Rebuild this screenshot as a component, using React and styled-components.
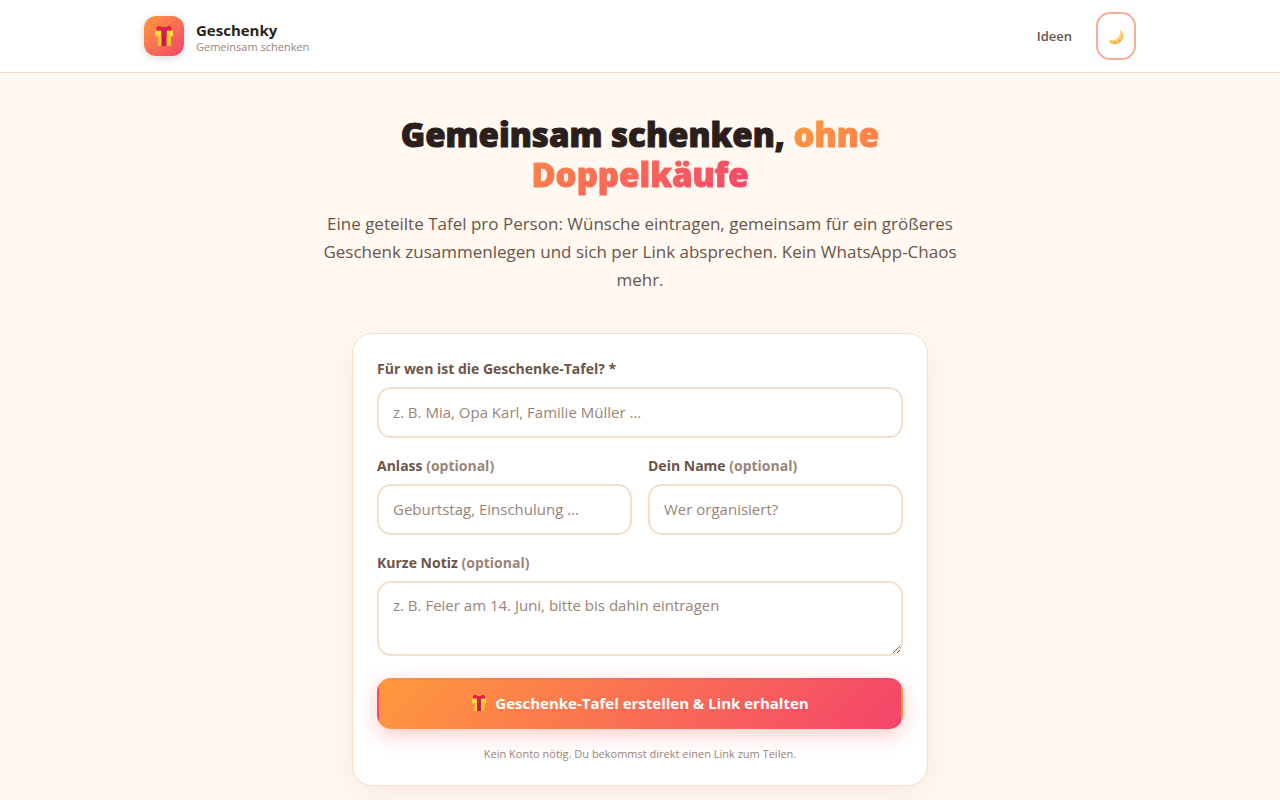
import React, { useState } from "react";
import styled, { createGlobalStyle } from "styled-components";

const GlobalStyle = createGlobalStyle`
  *, *::before, *::after {
    box-sizing: border-box;
  }

  body {
    margin: 0;
    background: #fff9f2;
    color: #2a1f1a;
    font-family: "Open Sans", "Noto Sans", sans-serif;
    font-size: 15px;
    line-height: 24px;
  }

  h1, p {
    margin: 0;
  }

  input, textarea, button {
    font: inherit;
  }
`;

const gradient = "linear-gradient(135deg, #ff9a3c 0%, #f4446b 100%)";

const Header = styled.header`
  background: #fff;
  border-bottom: 1px solid #f3dfcc;
`;

const HeaderInner = styled.div`
  display: flex;
  align-items: center;
  justify-content: space-between;
  max-width: 1040px;
  margin: 0 auto;
  padding: 12px 24px;
`;

const Brand = styled.a`
  display: flex;
  align-items: center;
  gap: 12px;
  color: inherit;
  text-decoration: none;
`;

const BrandMark = styled.span`
  display: flex;
  align-items: center;
  justify-content: center;
  width: 40px;
  height: 40px;
  border-radius: 12px;
  background: ${gradient};
  box-shadow: 0 2px 8px rgba(42, 31, 26, 0.16);
`;

const BrandText = styled.span`
  display: flex;
  flex-direction: column;
  padding-top: 4px;
`;

const BrandName = styled.span`
  font-size: 15px;
  font-weight: 700;
  line-height: 18px;
`;

const BrandClaim = styled.span`
  color: #9a8478;
  font-size: 11px;
  line-height: 16px;
`;

const Nav = styled.nav`
  display: flex;
  align-items: center;
  gap: 24px;
`;

const NavLink = styled.a`
  color: #6b5549;
  font-size: 13px;
  font-weight: 600;
  text-decoration: none;
`;

const ThemeToggle = styled.button`
  display: flex;
  align-items: center;
  justify-content: center;
  width: 40px;
  height: 48px;
  padding: 2px 0 0;
  border: 2px solid #f4b096;
  border-radius: 14px;
  background: #fff;
  cursor: pointer;
`;

const Main = styled.main`
  max-width: 688px;
  margin: 0 auto;
  padding: 42px 24px 48px;
`;

const Title = styled.h1`
  max-width: 560px;
  margin: 0 auto 15px;
  font-size: 33px;
  font-weight: 800;
  line-height: 40px;
  text-align: center;
  -webkit-text-stroke: 1px #2a1f1a;
`;

const Highlight = styled.span`
  background: ${gradient};
  -webkit-background-clip: text;
  background-clip: text;
  color: transparent;
  -webkit-text-stroke: 1px transparent;
`;

const Lead = styled.p`
  margin-bottom: 39px;
  color: #6b5549;
  font-size: 17px;
  line-height: 28px;
  text-align: center;
`;

const Card = styled.form`
  max-width: 576px;
  margin: 0 auto;
  padding: 24px;
  border: 1px solid #f3dfcc;
  border-radius: 20px;
  background: #fff;
  box-shadow: 0 8px 32px rgba(180, 80, 50, 0.09);
`;

const Fields = styled.div`
  display: flex;
  flex-direction: column;
  gap: 17px;
`;

const FieldRow = styled.div`
  display: grid;
  grid-template-columns: 1fr 1fr;
  gap: 16px;
`;

const Label = styled.label`
  display: block;
  margin-bottom: 7px;
  color: #6b5549;
  font-size: 14px;
  font-weight: 700;
  line-height: 22px;
`;

const Optional = styled.span`
  color: #9a8478;
`;

const Input = styled.input`
  display: block;
  width: 100%;
  height: 51px;
  padding: 0 14px 2px;
  border: 2px solid #f3dfcc;
  border-radius: 14px;
  background: #fff;
  color: #2a1f1a;
  outline: none;

  &::placeholder {
    color: #9a8478;
    opacity: 1;
  }

  &:focus {
    border-color: #f4b096;
  }
`;

const TextArea = styled(Input)`
  height: 75px;
  padding: 10px 14px;
  resize: vertical;
`;

const SubmitButton = styled.button`
  display: flex;
  align-items: center;
  justify-content: center;
  gap: 8px;
  width: 100%;
  height: 51px;
  margin-top: 22px;
  padding: 0 0 2px;
  border: 2px solid transparent;
  border-radius: 14px;
  background: ${gradient};
  box-shadow: 0 6px 20px rgba(244, 90, 70, 0.3);
  color: #fff;
  font-weight: 700;
  cursor: pointer;
`;

const Hint = styled.p`
  margin-top: 18px;
  color: #9a8478;
  font-size: 11px;
  line-height: 14px;
  text-align: center;
`;

const GiftIcon = ({ size }) => (
    <svg width={size} height={size} viewBox="0 0 20 20" aria-hidden="true">
        <path d="M3 9h14v10.200a.8.8 0 0 1-.8.8H3.800a.8.8 0 0 1-.8-.8z" fill="#f9c62c" />
        <path d="M3 9h2v11H3.800a.8.8 0 0 1-.8-.8z" fill="#dfa83a" />
        <rect x="1" y="4.500" width="18" height="6" rx="1" fill="#fddb3c" />
        <rect x="1" y="9.500" width="18" height="1" fill="#e9ae30" />
        <path d="M2.600 4.500C1.800 2 3.200 0 5.200 0c1.400 0 2.200.7 3 1.400h3.600C12.600.7 13.400 0 14.800 0c2 0 3.400 2 2.600 4.500z" fill="#df2341" />
        <rect x="7.500" y="1.400" width="5" height="18.600" fill="#c71b59" />
        <rect x="7.500" y="1.400" width="5" height="8.600" fill="#dc1e4b" />
    </svg>
);

const MoonIcon = () => (
    <svg width="16" height="16" viewBox="0 0 16 16" aria-hidden="true">
        <path d="M12.200 1c5 4.200 3.800 11.800-2.700 14C5.700 16.200 1.800 14.300.8 11.200c3.800.9 7.200.2 9.400-2.600 1.800-2.400 2.300-4.900 2-7.600z" fill="#f9bd55" />
        <path d="M12.200 1c3.200 3.700 2.300 9-2.200 10.900-3.200 1.300-6.400 1-9.200-.7 3.800.9 7.200.2 9.400-2.600 1.800-2.400 2.300-4.900 2-7.600z" fill="#fed578" />
        <circle cx="11.500" cy="11.500" r="1" fill="#e89b42" />
        <circle cx="7" cy="13.500" r="1" fill="#ec9f48" />
        <circle cx="3.500" cy="12.400" r=".7" fill="#eea74a" />
        <circle cx="13.500" cy="7.500" r=".8" fill="#eea74a" />
    </svg>
);

const App = () => {
    const [form, setForm] = useState({ person: "", occasion: "", organizer: "", note: "" });

    const handleChange = (e) => {
        setForm({ ...form, [e.target.name]: e.target.value });
    }

    return (
        <>
            <GlobalStyle />
            <Header>
                <HeaderInner>
                    <Brand href="#">
                        <BrandMark><GiftIcon size={20} /></BrandMark>
                        <BrandText>
                            <BrandName>Geschenky</BrandName>
                            <BrandClaim>Gemeinsam schenken</BrandClaim>
                        </BrandText>
                    </Brand>
                    <Nav>
                        <NavLink href="#ideen">Ideen</NavLink>
                        <ThemeToggle type="button"><MoonIcon /></ThemeToggle>
                    </Nav>
                </HeaderInner>
            </Header>
            <Main>
                <Title>
                    Gemeinsam schenken, <Highlight>ohne Doppelkäufe</Highlight>
                </Title>
                <Lead>
                    Eine geteilte Tafel pro Person: Wünsche eintragen, gemeinsam für ein größeres
                    Geschenk zusammenlegen und sich per Link absprechen. Kein WhatsApp-Chaos mehr.
                </Lead>
                <Card onSubmit={(e) => e.preventDefault()}>
                    <Fields>
                        <div>
                            <Label htmlFor="person">Für wen ist die Geschenke-Tafel? *</Label>
                            <Input id="person" name="person" required value={form.person} onChange={handleChange}
                                   placeholder="z. B. Mia, Opa Karl, Familie Müller …" />
                        </div>
                        <FieldRow>
                            <div>
                                <Label htmlFor="occasion">Anlass <Optional>(optional)</Optional></Label>
                                <Input id="occasion" name="occasion" value={form.occasion} onChange={handleChange}
                                       placeholder="Geburtstag, Einschulung …" />
                            </div>
                            <div>
                                <Label htmlFor="organizer">Dein Name <Optional>(optional)</Optional></Label>
                                <Input id="organizer" name="organizer" value={form.organizer} onChange={handleChange}
                                       placeholder="Wer organisiert?" />
                            </div>
                        </FieldRow>
                        <div>
                            <Label htmlFor="note">Kurze Notiz <Optional>(optional)</Optional></Label>
                            <TextArea as="textarea" id="note" name="note" rows={2} value={form.note} onChange={handleChange}
                                      placeholder="z. B. Feier am 14. Juni, bitte bis dahin eintragen" />
                        </div>
                    </Fields>
                    <SubmitButton type="submit">
                        <GiftIcon size={16} />
                        Geschenke-Tafel erstellen &amp; Link erhalten
                    </SubmitButton>
                    <Hint>Kein Konto nötig. Du bekommst direkt einen Link zum Teilen.</Hint>
                </Card>
            </Main>
        </>
    );
}

export default App;
